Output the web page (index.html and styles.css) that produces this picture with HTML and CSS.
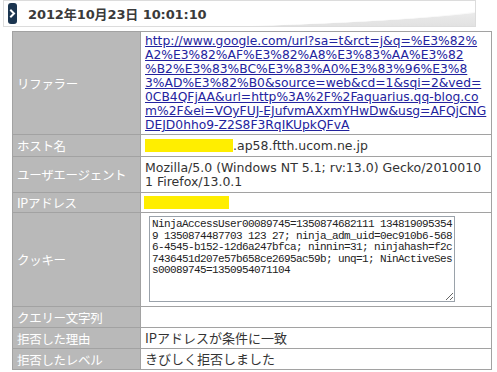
FILE: index.html
```html
<!DOCTYPE html>
<html lang="ja">
<head>
<meta charset="utf-8">
<link rel="stylesheet" href="styles.css">
</head>
<body>
<div class="page">
  <div class="head">
    <span class="icon"><svg width="9" height="21" viewBox="0 0 9 21"><path d="M3 7.5 L6 10.5 L3 13.5" fill="none" stroke="#fff" stroke-width="2" stroke-linecap="square"/></svg></span>
    <h1 class="title">2012年10月23日 10:01:10</h1>
  </div>
  <div class="grid">
    <div class="lab">リファラー</div>
    <div class="val link"><a href="#">http://www.google.com/url?sa=t&amp;rct=j&amp;q=%E3%82%<br>A2%E3%82%AF%E3%82%A8%E3%83%AA%E3%82<br>%B2%E3%83%BC%E3%83%A0%E3%83%96%E3%8<br>3%AD%E3%82%B0&amp;source=web&amp;cd=1&amp;sqi=2&amp;ved=<br>0CB4QFjAA&amp;url=http%3A%2F%2Faquarius.qq-blog.co<br>m%2F&amp;ei=VOyFUJ-EJufvmAXxmYHwDw&amp;usg=AFQjCNG<br>DEJD0hho9-Z2S8F3RqIKUpkQFvA</a></div>
    <div class="lab">ホスト名</div>
    <div class="val"><span class="mask host"></span>.ap58.ftth.ucom.ne.jp</div>
    <div class="lab">ユーザエージェント</div>
    <div class="val">Mozilla/5.0 (Windows NT 5.1; rv:13.0) Gecko/2010010<br>1 Firefox/13.0.1</div>
    <div class="lab">IPアドレス</div>
    <div class="val"><span class="mask ip"></span></div>
    <div class="lab">クッキー</div>
    <div class="val top"><textarea class="cookie" wrap="off" readonly>NinjaAccessUser00089745=1350874682111 134819095354
9 1350874487703 123 27; ninja_adm_uid=0ec910b6-568
6-4545-b152-12d6a247bfca; ninnin=31; ninjahash=f2c
7436451d207e57b658ce2695ac59b; unq=1; NinActiveSes
s00089745=1350954071104</textarea></div>
    <div class="lab">クエリー文字列</div>
    <div class="val"></div>
    <div class="lab">拒否した理由</div>
    <div class="val jp">IPアドレスが条件に一致</div>
    <div class="lab">拒否したレベル</div>
    <div class="val jp">きびしく拒否しました</div>
  </div>
</div>
</body>
</html>
```
FILE: styles.css
```css
html, body {
  margin: 0;
  padding: 0;
  background: #fff;
}
.page {
  padding-left: 3px;
}
.head {
  box-sizing: border-box;
  width: 473px;
  height: 27px;
  border: 1px solid #dcdcdc;
  display: flex;
  align-items: center;
  padding-left: 4px;
  background:
    radial-gradient(ellipse 521px 29px at 0 0, #ffffff 97%, #f6f6f6 99%, rgba(255,255,255,0) 100%),
    linear-gradient(#f2f2f2, #e2e2e2);
}
.icon {
  display: block;
  width: 9px;
  height: 21px;
  background: #1b3550;
  border-radius: 3px;
}
.icon svg {
  display: block;
}
.title {
  margin: 0 0 0 11px;
  font: bold 13px "DejaVu Sans", "Noto Sans CJK JP", sans-serif;
  color: #3a3a3a;
  letter-spacing: -0.1px;
}
.grid {
  margin: 4px 0 0 9px;
  width: 480px;
  box-sizing: border-box;
  padding: 1px;
  gap: 1px;
  background: #a2a2a2;
  display: grid;
  grid-template-columns: 127px 350px;
  grid-template-rows: 102px 21px 35px 19px 93px 20px 20px 20px;
}
.lab {
  background: #b9b9b9;
  color: #fff;
  font: 12.5px "Noto Sans CJK JP", sans-serif;
  letter-spacing: -0.3px;
  padding-left: 4px;
  display: flex;
  align-items: center;
}
.val {
  background: #fff;
  color: #333;
  font: 12.5px/14px "DejaVu Sans", "Noto Sans CJK JP", sans-serif;
  padding: 0 4px;
  display: flex;
  align-items: center;
  white-space: nowrap;
}
.val.top {
  align-items: flex-start;
}
.val.jp {
  font-family: "Noto Sans CJK JP", sans-serif;
  font-size: 13px;
}
.link a {
  color: #23239e;
  text-decoration: underline;
  font-size: 12.3px;
}
.mask {
  display: inline-block;
  background: #ffee00;
}
.mask.host {
  width: 88px;
  height: 13px;
}
.mask.ip {
  width: 85px;
  height: 13px;
  margin-left: -1px;
}
.cookie {
  display: block;
  box-sizing: border-box;
  margin: 3px 0 0 4px;
  width: 306px;
  height: 86px;
  border: 1px solid #9aa2aa;
  padding: 2px;
  font: 11px/11.6px "Liberation Mono", monospace;
  letter-spacing: -0.6px;
  color: #222;
  background: #fff;
  overflow: hidden;
  white-space: pre;
  resize: both;
  outline: none;
}
```
